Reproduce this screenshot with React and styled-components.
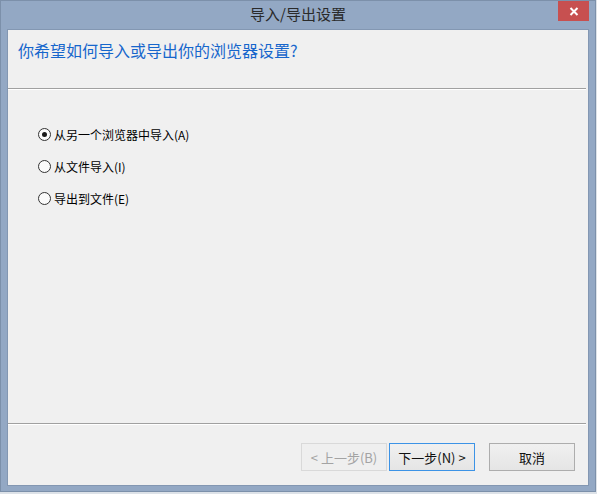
import styled, { createGlobalStyle } from 'styled-components';
import { useState } from 'react';

const Global = createGlobalStyle`
  body {
    margin: 0;
    background: #dde2e8;
    font-family: "Noto Sans CJK SC", "Noto Sans", sans-serif;
  }
`;

const Window = styled.div`
  width: 596px;
  height: 492px;
  box-sizing: border-box;
  background: #93a8c4;
  border: 1px solid #7c90aa;
  padding: 0 6px 5px 6px;
  display: flex;
  flex-direction: column;
`;

const TitleBar = styled.div`
  height: 28px;
  display: grid;
  grid-template-columns: 1fr auto 1fr;
  align-items: start;
`;

const Title = styled.div`
  grid-column: 2;
  font-size: 15px;
  line-height: 26px;
  color: #2a2a2a;
`;

const CloseButton = styled.button`
  grid-column: 3;
  justify-self: end;
  width: 31px;
  height: 20px;
  border: none;
  padding: 0;
  background: #c75050;
  display: flex;
  align-items: center;
  justify-content: center;
`;

const Client = styled.div`
  flex: 1;
  background: #f0f0f0;
  border: 1px solid #8397b2;
  display: flex;
  flex-direction: column;
`;

const Header = styled.div`
  height: 58px;
  box-sizing: border-box;
  padding: 9px 0 0 10px;
  font-size: 16px;
  line-height: 22px;
  color: #1666cc;
`;

const Separator = styled.div`
  height: 1px;
  margin-right: 2px;
  background: #a0a0a0;
  box-shadow: 0 1px 0 #ffffff;
`;

const Options = styled.div`
  flex: 1;
  padding: 29px 0 0 30px;
  display: flex;
  flex-direction: column;
`;

const Option = styled.label`
  height: 32px;
  display: flex;
  align-items: center;
  gap: 3px;
  font-size: 12px;
  color: #000;
  cursor: default;
`;

const Radio = styled.span`
  width: 13px;
  height: 13px;
  box-sizing: border-box;
  border-radius: 50%;
  border: 1px solid #333;
  background: #fbfbfb;
  display: flex;
  align-items: center;
  justify-content: center;

  &::after {
    content: '';
    width: 5px;
    height: 5px;
    border-radius: 50%;
    background: ${(p) => (p.$checked ? '#1a1a1a' : 'transparent')};
  }
`;

const Footer = styled.div`
  padding: 19px 13px 14px 0;
  display: flex;
  justify-content: flex-end;
`;

const Button = styled.button`
  width: 86px;
  height: 28px;
  box-sizing: border-box;
  margin-left: ${(p) => p.$gap || 0}px;
  font-family: inherit;
  font-size: 13px;
  color: ${(p) => (p.disabled ? '#a3a3a3' : '#111')};
  background: ${(p) => (p.disabled ? '#efefef' : 'linear-gradient(#f0f0f0, #e5e5e5)')};
  border: 1px solid ${(p) => (p.disabled ? '#d9d9d9' : p.$primary ? '#3c93e6' : '#adadad')};
  padding: 0;
`;

const options = ['从另一个浏览器中导入(A)', '从文件导入(I)', '导出到文件(E)'];

export default function App() {
  const [choice, setChoice] = useState(0);

  return (
    <>
      <Global />
      <Window>
        <TitleBar>
          <Title>导入/导出设置</Title>
          <CloseButton>
            <svg width="10" height="9" viewBox="0 0 10 9">
              <path d="M1.5 1 L8.5 8 M8.5 1 L1.5 8" stroke="#fff" strokeWidth="2" />
            </svg>
          </CloseButton>
        </TitleBar>
        <Client>
          <Header>你希望如何导入或导出你的浏览器设置?</Header>
          <Separator />
          <Options>
            {options.map((text, i) => (
              <Option key={text} onClick={() => setChoice(i)}>
                <Radio $checked={choice === i} />
                {text}
              </Option>
            ))}
          </Options>
          <Separator />
          <Footer>
            <Button disabled>&lt; 上一步(B)</Button>
            <Button $primary $gap={2}>下一步(N) &gt;</Button>
            <Button $gap={14}>取消</Button>
          </Footer>
        </Client>
      </Window>
    </>
  );
}
